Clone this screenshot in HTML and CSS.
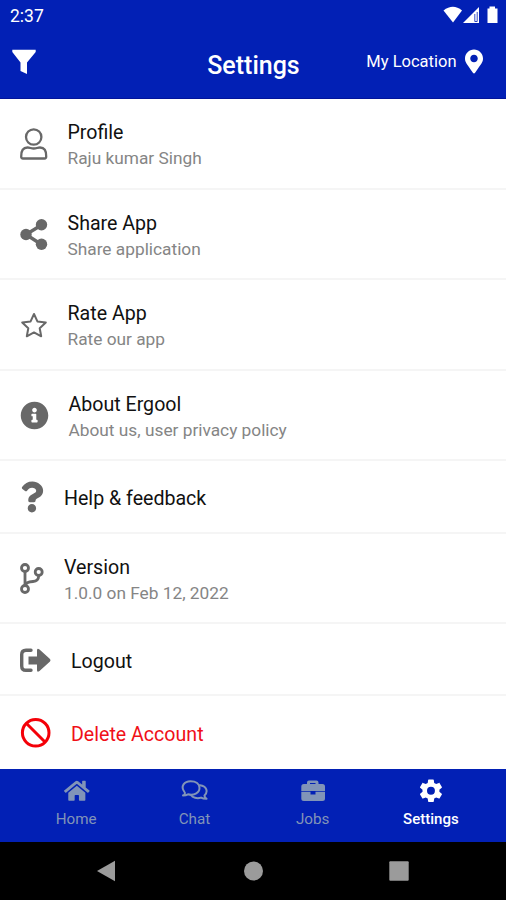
FILE: index.html
```html
<!DOCTYPE html>
<html lang="en">
<head>
<meta charset="utf-8">
<title>Settings</title>
<link rel="stylesheet" href="styles.css">
</head>
<body>
<header class="header">
  <div class="status">
    <span class="clock">2:37</span>
    <svg class="status-icons" viewBox="442 5 58 20"><path d="M443.500 10.500Q453 3 462 10.500L453 22.500z"/><path d="M463 23 479 7V23z"/><path class="signal-gap" d="M474.800 14V21.500H477.200V12"/><path d="M487.500 8.500h2v-2h5.500v2h2.500V23h-10z"/></svg>
  </div>
  <div class="toolbar">
    <svg class="filter" viewBox="12 49 25 26"><path d="M12.300 49.800H35.700V52L27 62.500V74L20.500 71V62.500L12.300 52z"/></svg>
    <h1 class="heading">Settings</h1>
    <div class="location"><span>My Location</span>
      <svg class="pin" viewBox="0 0 384 512"><path d="M172.268 501.67C26.97 291.031 0 269.413 0 192 0 85.961 85.961 0 192 0s192 85.961 192 192c0 77.413-26.97 99.031-172.268 309.67-9.535 13.774-29.93 13.773-39.464 0zM192 272c44.183 0 80-35.817 80-80s-35.817-80-80-80-80 35.817-80 80 35.817 80 80 80z"/></svg>
    </div>
  </div>
</header>
<main class="list">
  <div class="row">
    <svg class="icon line" viewBox="18 127 34 34"><circle cx="33.700" cy="137" r="7.700"/><path d="M21.200 156.500Q21 147.500 27.500 147.500C30 147.500 31 148.500 33.700 148.500S37.500 147.500 40 147.500Q46.500 147.500 46.200 156.500Q46.200 158.500 44.500 158.500H23Q21.200 158.500 21.200 156.500z"/></svg>
    <div class="text"><div class="title">Profile</div><div class="sub">Raju kumar Singh</div></div>
  </div>
  <div class="row">
    <svg class="icon" viewBox="18 218 34 34"><path class="link" d="M41.500 225 26 234.500 41.500 244.500"/><circle cx="41.500" cy="224.700" r="5.700"/><circle cx="26" cy="234.500" r="5.700"/><circle cx="41.500" cy="244.300" r="5.700"/></svg>
    <div class="text"><div class="title">Share App</div><div class="sub">Share application</div></div>
  </div>
  <div class="row">
    <svg class="icon line star" viewBox="18 308 34 34"><path d="M34 314 37.400 321.400 45.800 322.500 39.700 328.200 41.200 336.300 34 332.400 26.800 336.300 28.300 328.200 22.200 322.500 30.600 321.400z"/></svg>
    <div class="text"><div class="title">Rate App</div><div class="sub">Rate our app</div></div>
  </div>
  <div class="row">
    <svg class="icon" viewBox="18 399 34 34"><g transform="translate(20.300 401.200) scale(.0555)"><path d="M256 8C119.043 8 8 119.083 8 256c0 136.997 111.043 248 248 248s248-111.003 248-248C504 119.083 392.957 8 256 8zm0 110c23.196 0 42 18.804 42 42s-18.804 42-42 42-42-18.804-42-42 18.804-42 42-42zm56 254c0 6.627-5.373 12-12 12h-88c-6.627 0-12-5.373-12-12v-24c0-6.627 5.373-12 12-12h12v-64h-12c-6.627 0-12-5.373-12-12v-24c0-6.627 5.373-12 12-12h64c6.627 0 12 5.373 12 12v100h12c6.627 0 12 5.373 12 12v24z"/></g></svg>
    <div class="text about"><div class="title">About Ergool</div><div class="sub">About us, user privacy policy</div></div>
  </div>
  <div class="row help">
    <svg class="icon" viewBox="18 481 34 34"><g transform="translate(20.300 481.500) scale(.0605)"><path d="M202.021 0C122.202 0 70.503 32.703 29.914 91.026c-7.363 10.580-5.093 25.086 5.178 32.874l43.138 32.709c10.373 7.865 25.132 6.026 33.253-4.148 25.049-31.381 43.630-49.449 82.757-49.449 30.764 0 68.816 19.799 68.816 49.631 0 22.552-18.617 34.134-48.993 51.164-35.423 19.860-82.299 44.576-82.299 106.405V320c0 13.255 10.745 24 24 24h72.471c13.255 0 24-10.745 24-24v-5.773c0-42.860 125.268-44.645 125.268-160.627C377.504 66.256 286.902 0 202.021 0zM192 373.459c-38.196 0-69.271 31.075-69.271 69.271 0 38.195 31.075 69.270 69.271 69.270s69.271-31.075 69.271-69.271-31.075-69.270-69.271-69.270z"/></g></svg>
    <div class="text near"><div class="title">Help &amp; feedback</div></div>
  </div>
  <div class="row version">
    <svg class="icon line branch" viewBox="18 562 34 34"><circle cx="25" cy="568" r="3.500"/><circle cx="38.700" cy="572" r="3.500"/><circle cx="25" cy="589" r="3.500"/><path d="M25 572V585M38.700 576Q38.500 581 33 581.500Q26 582 25.500 585"/></svg>
    <div class="text near"><div class="title">Version</div><div class="sub">1.0.0 on Feb 12, 2022</div></div>
  </div>
  <div class="row logout">
    <svg class="icon" viewBox="18 643 34 34"><path class="bracket" d="M31 650.300H26Q21.700 650.300 21.700 654.600V666Q21.700 670.300 26 670.300H31"/><path d="M28.500 656.500H37V650.500Q37 647.500 39.500 649.500L50 659Q51 660.200 50 661.400L39.500 671Q37 673 37 670V664.500H28.500z"/></svg>
    <div class="text far"><div class="title">Logout</div></div>
  </div>
  <div class="row delete">
    <svg class="icon line ban" viewBox="18 717 34 34"><circle cx="35.700" cy="732.800" r="13.300"/><path d="M26.500 723.500 45 742"/></svg>
    <div class="text far"><div class="title">Delete Account</div></div>
  </div>
</main>
<nav class="tabs">
  <div class="tab"><svg class="tab-icon" viewBox="62 777 28 28"><g transform="translate(64 779.300) scale(.0445)"><path d="M280.370 148.260L96 300.110V464a16 16 0 0 0 16 16l112.060-.29a16 16 0 0 0 15.920-16V368a16 16 0 0 1 16-16h64a16 16 0 0 1 16 16v95.640a16 16 0 0 0 16 16.050L464 480a16 16 0 0 0 16-16V300L295.670 148.260a12.190 12.190 0 0 0-15.300 0zM571.600 251.470L488 182.560V44.050a12 12 0 0 0-12-12h-56a12 12 0 0 0-12 12v72.610L318.470 43a48 48 0 0 0-61 0L4.340 251.470a12 12 0 0 0-1.600 16.900l25.500 31A12 12 0 0 0 45.150 301l235.220-193.740a12.190 12.190 0 0 1 15.300 0L530.900 301a12 12 0 0 0 16.900-1.600l25.500-31a12 12 0 0 0-1.700-16.930z"/></g></svg><span>Home</span></div>
  <div class="tab"><svg class="tab-icon chat" viewBox="180.500 777 28 28"><path d="M183.500 795.500C185.500 794.500 185.800 793 185 792C180.500 786 185 781.200 191 781.200C196.500 781.200 200 784 200 788C200 793 194 796 188.500 794.300Q186.500 795.500 183.500 795.500z"/><path d="M200.500 785.200C207 786 209 791.500 205 795.500Q204.700 797 207 798.800Q203.500 798.800 201.500 797.600C197.500 799 193 797.500 191.500 795"/></svg><span>Chat</span></div>
  <div class="tab"><svg class="tab-icon" viewBox="299 777 28 28"><path d="M307 784V782.500Q307 780.500 309 780.500H316.500Q318.500 780.500 318.500 782.500V784H322.500Q325 784 325 786.500V791H301.300V786.500Q301.300 784 303.800 784zM310 784H315.500V783H310zM301.300 791.800H310.500V794.500H315.500V791.800H325V798.500Q325 801 322.500 801H303.800Q301.300 801 301.300 798.500z"/></svg><span>Jobs</span></div>
  <div class="tab active"><svg class="tab-icon" viewBox="417 777 28 28"><g transform="translate(417.400 777.200) scale(1.130)"><path d="M12,15.500A3.500,3.500 0 0,1 8.500,12A3.500,3.500 0 0,1 12,8.500A3.500,3.500 0 0,1 15.500,12A3.500,3.500 0 0,1 12,15.500M19.430,12.970C19.470,12.650 19.500,12.330 19.500,12C19.500,11.670 19.470,11.340 19.430,11L21.540,9.370C21.730,9.220 21.780,8.950 21.660,8.730L19.660,5.270C19.540,5.050 19.270,4.960 19.050,5.050L16.560,6.050C16.040,5.660 15.500,5.320 14.870,5.070L14.500,2.420C14.460,2.180 14.250,2 14,2H10C9.750,2 9.540,2.180 9.500,2.420L9.130,5.070C8.500,5.320 7.960,5.660 7.440,6.050L4.950,5.050C4.730,4.960 4.460,5.050 4.340,5.270L2.340,8.730C2.210,8.950 2.270,9.220 2.460,9.370L4.570,11C4.530,11.340 4.500,11.670 4.500,12C4.500,12.330 4.530,12.650 4.570,12.970L2.460,14.630C2.270,14.780 2.210,15.050 2.340,15.270L4.340,18.730C4.460,18.950 4.730,19.030 4.950,18.950L7.440,17.940C7.960,18.340 8.500,18.680 9.130,18.930L9.500,21.580C9.540,21.820 9.750,22 10,22H14C14.250,22 14.460,21.820 14.500,21.580L14.870,18.930C15.500,18.670 16.040,18.340 16.560,17.940L19.050,18.950C19.270,19.030 19.540,18.950 19.660,18.730L21.660,15.270C21.780,15.050 21.730,14.780 21.540,14.630L19.430,12.970Z"/></g></svg><span>Settings</span></div>
</nav>
<footer class="system">
  <svg viewBox="0 0 22 22"><path d="M1 11 19 .7V21.300z"/></svg>
  <svg viewBox="0 0 22 22"><circle cx="11.500" cy="11" r="9.500"/></svg>
  <svg viewBox="0 0 22 22"><rect x="1.300" y="1.300" width="19.400" height="19.400" rx="1"/></svg>
</footer>
</body>
</html>
```
FILE: styles.css
```css
* { box-sizing: border-box; }
body {
  margin: 0;
  width: 506px;
  height: 900px;
  display: flex;
  flex-direction: column;
  overflow: hidden;
  background: #fff;
  color: #111;
  font-family: Roboto, sans-serif;
}
svg { display: block; flex: none; fill: currentColor; }

.header { height: 99px; background: #0220b5; color: #fff; border-bottom: 1px solid #02149a; }
.status { height: 32px; padding: 5px 6px 0 10px; display: flex; justify-content: space-between; }
.clock { font-size: 17.5px; line-height: 23px; }
.status-icons { width: 58px; height: 20px; }
.signal-gap { fill: none; stroke: #0220b5; stroke-width: 0.8; }
.toolbar { display: grid; grid-template-columns: minmax(0, 1fr) auto minmax(0, 1fr); padding: 0 11px 0 12px; height: 66px; }
.filter { width: 25px; height: 26px; margin-top: 17px; }
.heading { margin: 18px 0 0; font-size: 25px; line-height: 32px; font-weight: 500; }
.location { display: flex; justify-content: flex-end; gap: 8px; padding: 17px 12.5px 0 0; font-size: 16.5px; line-height: 25px; white-space: nowrap; }
.pin { width: 18px; height: 25px; }

.list { height: 670px; display: flex; flex-direction: column; }
.row {
  height: 90.5px;
  padding: 2px 0 0 18px;
  display: flex;
  align-items: center;
  border-bottom: 2px solid #f5f5f5;
}
.help { height: 73px; }
.version { height: 90px; }
.logout { height: 72px; }
.delete { height: 73px; border-bottom: 0; }
.icon { width: 34px; height: 34px; color: #686868; }
.line { fill: none; stroke: currentColor; stroke-width: 2.3; stroke-linejoin: round; }
.star { stroke-width: 2; }
.branch { stroke-width: 2.8; }
.delete .ban { color: #f40008; stroke-width: 3; }
.link, .bracket { fill: none; stroke: currentColor; stroke-width: 3.4; stroke-linecap: round; }
.text { margin-left: 15.5px; padding-top: 3px; white-space: nowrap; }
.about { margin-left: 16.5px; }
.near { margin-left: 12px; }
.far { margin-left: 19px; }
.title { font-size: 19.6px; line-height: 26px; }
.sub { font-size: 17.3px; line-height: 25px; color: #858585; }
.delete .title { color: #f01018; }

.tabs {
  height: 73px;
  padding: 8px 16px 0 17px;
  display: grid;
  grid-template-columns: repeat(4, 1fr);
  background: #0220b5;
  color: #8194b8;
}
.tab { display: flex; flex-direction: column; align-items: center; font-size: 15.2px; line-height: 22px; gap: 3px; }
.tab-icon { width: 28px; height: 28px; }
.chat { fill: none; stroke: currentColor; stroke-width: 2; stroke-linejoin: round; stroke-linecap: round; }
.active { color: #fff; font-size: 15px; font-weight: 500; }

.system { height: 58px; padding: 0 34px; display: grid; grid-template-columns: repeat(3, 1fr); justify-items: center; align-items: center; background: #000; color: #9b9b9b; }
.system svg { width: 22px; height: 22px; }
```
